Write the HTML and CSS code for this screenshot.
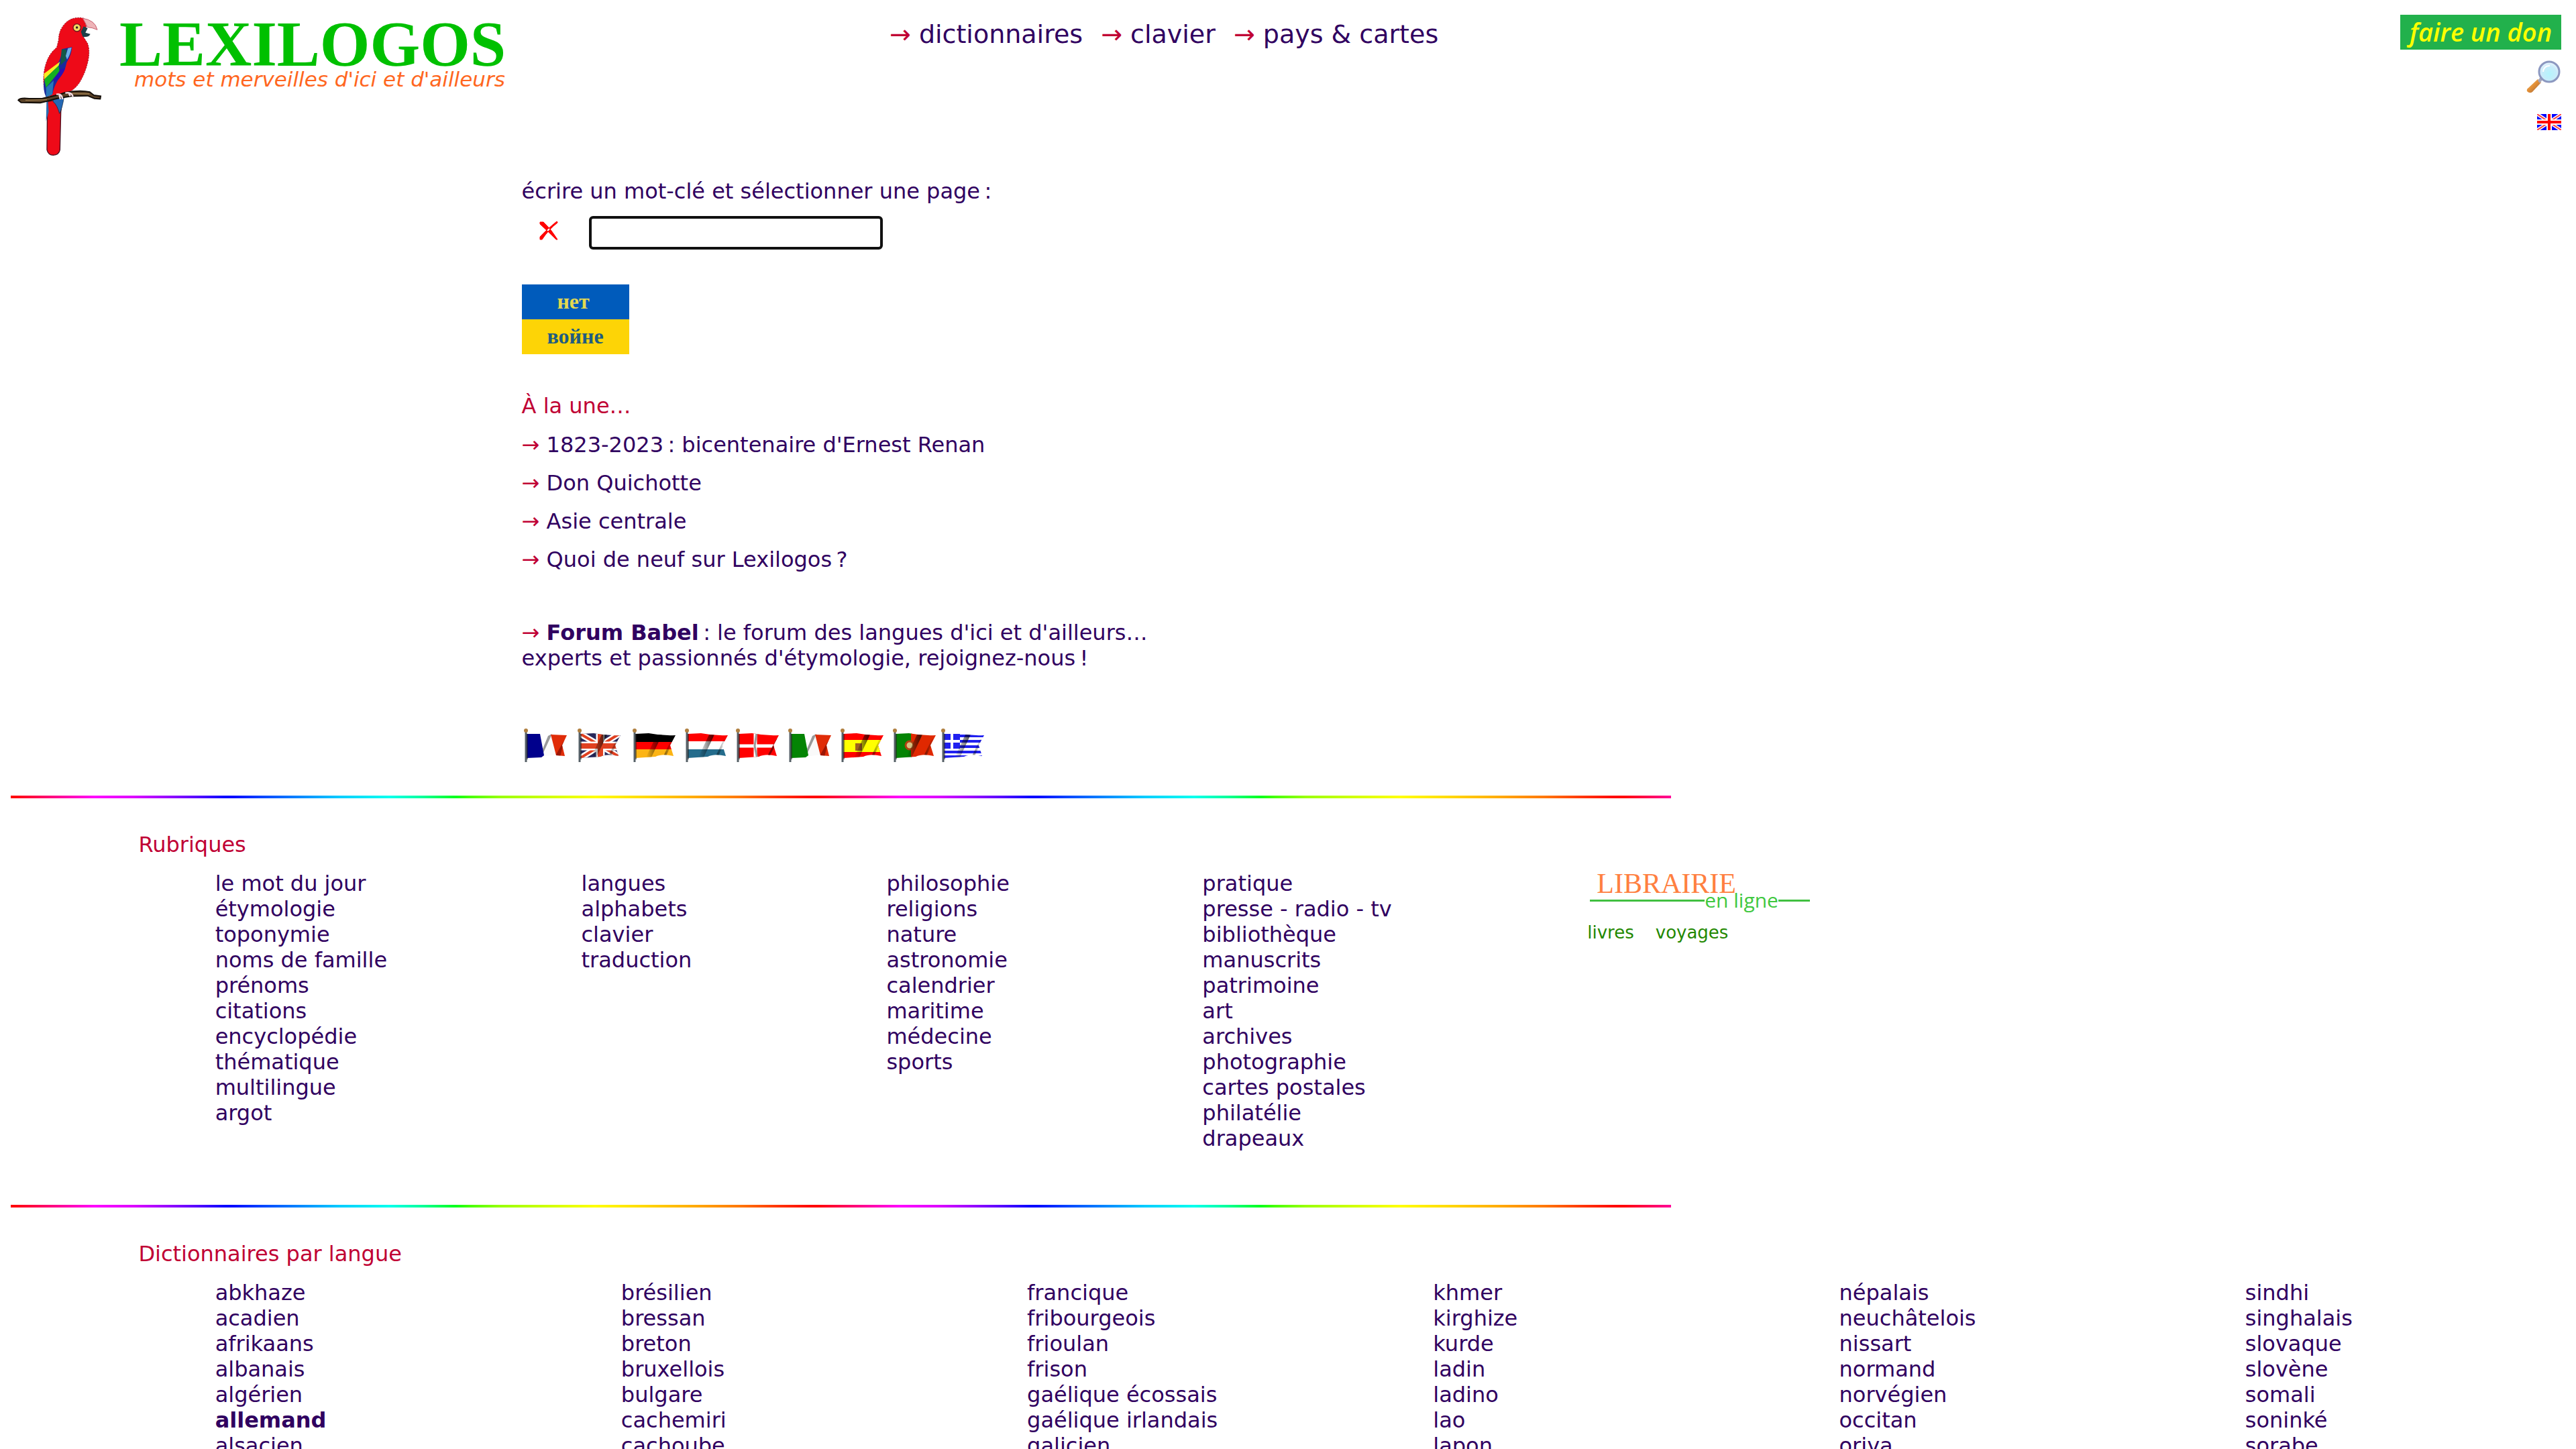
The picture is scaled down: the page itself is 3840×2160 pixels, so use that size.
FILE: index.html
```html
<!DOCTYPE html>
<html lang="fr">
<head>
<meta charset="utf-8">
<title>Lexilogos</title>
<link rel="stylesheet" href="styles.css">
</head>
<body>
<header class="top">
  <a class="logo" href="#">
    <svg class="parrot" viewBox="0 0 480 690" aria-hidden="true">
      <path d="M182 425 L180 640 Q186 664 208 664 Q234 662 238 640 L242 470 L250 410 Z" fill="#ee0a18" stroke="#4a1020" stroke-width="4"/>
      <path d="M178 420 L176 512 L188 470 L184 420 Z" fill="#2a6cb0"/>
      <path d="M205 405 L256 405 Q250 450 236 478 Q226 440 208 425 Z" fill="#2468b4" stroke="#123" stroke-width="2"/>
      <path d="M345 52 Q300 42 268 68 Q232 100 232 150 L224 182 Q188 210 174 260 Q162 300 166 350 L176 400 L250 396 Q300 378 325 340 Q350 300 362 250 Q374 200 362 165 L340 130 L356 90 Z" fill="#ee0a18" stroke="#a01020" stroke-width="3" stroke-dasharray="7 4"/>
      <path d="M340 52 Q395 60 405 103 Q380 92 362 92 Z" fill="#eeb4b8" stroke="#c86070" stroke-width="3"/>
      <path d="M344 88 L362 96 L352 116 L374 122 Q368 138 340 134 L332 112 Z" fill="#1e4048"/>
      <ellipse cx="314" cy="94" rx="17" ry="17" fill="#f2d860" stroke="#701820" stroke-width="4"/>
      <circle cx="314" cy="93" r="5" fill="#222"/>
      <path d="M246 190 L292 180 Q290 215 268 250 Q262 290 228 330 Q210 360 204 392 L176 404 Q160 370 168 330 Q172 310 206 280 Q246 244 246 190Z" fill="#1c2a9c"/>
      <path d="M246 190 L268 192 L264 240 L240 262 Z" fill="#145848"/>
      <path d="M274 186 L290 182 Q284 215 270 236 L264 220Z" fill="#6cb0e4"/>
      <path d="M238 246 L232 264 L168 325 L166 300 Z" fill="#f6ee20"/>
      <path d="M232 264 L236 288 L176 362 L168 325 Z" fill="#14b020"/>
      <path d="M240 280 L262 276 Q250 306 228 325 L206 340Z" fill="#2a10b4"/>
      <path d="M176 362 L210 330 L204 392 L176 404 Z" fill="#2878b8"/>
      <path d="M52 418 Q60 406 100 411 L160 410 Q230 396 262 384 Q330 372 372 382 L390 396 L420 400 L418 412 L392 410 L362 398 L290 400 Q220 410 190 420 L150 430 L64 428 Z" fill="#5a4228" stroke="#140e08" stroke-width="6"/>
      <path d="M84 418 L180 416 M290 388 L370 390" stroke="#a08050" stroke-width="4" fill="none"/>
      <path d="M222 392 Q246 386 250 414 M234 390 L240 414 M262 386 Q290 380 296 402 M276 384 L284 400" fill="none" stroke="#f4dce4" stroke-width="7"/>
    </svg>
    <span class="brand">
      <span class="brand-name">LEXILOGOS</span>
      <span class="brand-tag">mots et merveilles d'ici et d'ailleurs</span>
    </span>
  </a>
  <nav class="menu">
    <span><span class="arrow">→</span> <a href="#">dictionnaires</a></span>
    <span><span class="arrow">→</span> <a href="#">clavier</a></span>
    <span><span class="arrow">→</span> <a href="#">pays &amp; cartes</a></span>
  </nav>
  <div class="tools">
    <a class="donate" href="#">faire un don</a>
    <a class="tool-icon" href="#" aria-label="recherche">
      <svg width="52" height="50" viewBox="0 0 52 50">
        <defs>
          <radialGradient id="lens" cx=".5" cy=".6" r=".6"><stop offset="0" stop-color="#b4f4fc"/><stop offset=".6" stop-color="#c8ecfa"/><stop offset="1" stop-color="#eef6fd"/></radialGradient>
          <linearGradient id="handle" x1="0" y1="0" x2="1" y2="1"><stop offset="0" stop-color="#f8c070"/><stop offset=".5" stop-color="#e08c34"/><stop offset="1" stop-color="#8c6450"/></linearGradient>
        </defs>
        <path d="M17 28 L22 33 L9 47 Q5 50 1 46 Q0 43 3 41 Z" fill="url(#handle)"/>
        <path d="M17 30 L21 25 L24 29 L20 34 Z" fill="#a8a8bc"/>
        <circle cx="34" cy="17" r="15" fill="url(#lens)" stroke="#8c98c0" stroke-width="3"/>
        <path d="M25 17 Q26 8 35 8" fill="none" stroke="#fff" stroke-width="2"/>
      </svg>
    </a>
    <a class="tool-icon" href="#" aria-label="English">
      <svg width="36" height="24" viewBox="0 0 36 24">
        <rect width="36" height="24" fill="#00f"/>
        <path d="M0 0 L36 24 M36 0 L0 24" stroke="#fff" stroke-width="5"/>
        <path d="M0 0 L36 24 M36 0 L0 24" stroke="#f44" stroke-width="2"/>
        <path d="M18 0 V24 M0 12 H36" stroke="#fff" stroke-width="8"/>
        <path d="M18 0 V24 M0 12 H36" stroke="#f00" stroke-width="4"/>
      </svg>
    </a>
  </div>
</header>

<main>
  <section class="intro">
    <label for="mot">écrire un mot-clé et sélectionner une page&#8239;:</label>
    <div class="search">
      <button class="clear" type="button" aria-label="effacer">
        <svg width="28" height="28" viewBox="0 0 28 28"><path d="M1 1 H6 Q18 12 27 27 L25 27 Q14 16 1 4Z M27 1 L26 0 Q10 13 1 23 V27 H4 Q14 12 27 2Z" fill="#f00" stroke="#f00"/></svg>
      </button>
      <input id="mot" class="keyword" type="text">
    </div>
    <a class="peace" href="#"><span class="peace-top">нет</span><span class="peace-bottom">войне</span></a>
    <h2 class="title">À la une…</h2>
    <ul class="news">
      <li><span class="arrow">→</span> <a href="#">1823-2023&#8239;: bicentenaire d'Ernest Renan</a></li>
      <li><span class="arrow">→</span> <a href="#">Don Quichotte</a></li>
      <li><span class="arrow">→</span> <a href="#">Asie centrale</a></li>
      <li><span class="arrow">→</span> <a href="#">Quoi de neuf sur Lexilogos&#8239;?</a></li>
    </ul>
    <p class="forum"><span class="arrow">→</span> <a href="#"><b>Forum Babel</b></a>&#8239;: le forum des langues d'ici et d'ailleurs…<br>experts et passionnés d'étymologie, rejoignez-nous&#8239;!</p>
    <div class="flags">
      <svg class="defs" width="0" height="0" aria-hidden="true">
        <defs>
          <clipPath id="cloth"><path d="M4 8 L24 7 Q44 11 64 10 L56 25 L61 41 Q44 37 34 42 L4 44Z"/></clipPath>
          <clipPath id="fold"><path d="M4 8 L24 8 L30 40 L26 43 L4 44Z M40 9 L64 10 L57 25 L61 41 L48 40Z"/></clipPath>
          <linearGradient id="shade"><stop offset="0" stop-color="#000" stop-opacity="0"/><stop offset=".5" stop-color="#000" stop-opacity=".65"/><stop offset="1" stop-color="#000" stop-opacity="0"/></linearGradient>
          <g id="pole"><path d="M3 4 V50" stroke="#555f66" stroke-width="3"/><path d="M5 8 V46" stroke="#222" stroke-width="1"/><circle cx="3" cy="3" r="3" fill="#b08040"/></g>
          <g id="shadow"><path d="M36 9 L44 9 L28 43 L20 43Z M58 16 L62 14 L50 41 L46 41Z" fill="url(#shade)"/></g>
        </defs>
      </svg>
      <a href="#" aria-label="français"><svg width="68" height="50" viewBox="0 0 68 50"><path d="M38 8 L48 9 L52 30 L48 39 L26 42Z" fill="#fafafa"/><path d="M24 40 L36 11 L42 8 L28 38Z" fill="#999"/><g clip-path="url(#fold)"><path d="M4 6h28v40H4z" fill="#00008c"/><path d="M38 6h28v40H38z" fill="#e02c08"/><path d="M60 18 L46 42 L54 42Z" fill="#500" opacity=".5"/></g><use href="#pole"/></svg></a>
      <a href="#" aria-label="anglais"><svg width="70" height="50" viewBox="0 0 70 50"><g clip-path="url(#cloth)"><path d="M4 6h62v40H4z" fill="#28285c"/><path d="M4 8 L62 42 M62 8 L4 44" stroke="#fff" stroke-width="9"/><path d="M4 8 L62 42 M62 8 L4 44" stroke="#e04020" stroke-width="4"/><path d="M4 26 H66 M34 6 V46" stroke="#fff" stroke-width="13"/><path d="M4 26 H66 M34 6 V46" stroke="#e04020" stroke-width="8"/><use href="#shadow"/></g><use href="#pole"/></svg></a>
      <a href="#" aria-label="allemand"><svg width="66" height="50" viewBox="0 0 66 50"><g clip-path="url(#cloth)"><path d="M4 6h62v14H4z" fill="#000"/><path d="M4 20h62v12H4z" fill="#f00"/><path d="M4 31h62v15H4z" fill="#fcb414"/><use href="#shadow"/></g><use href="#pole"/></svg></a>
      <a href="#" aria-label="néerlandais"><svg width="64" height="50" viewBox="0 0 64 50"><g clip-path="url(#cloth)"><path d="M4 6h62v14H4z" fill="#f00"/><path d="M4 19h62v12H4z" fill="#fff"/><path d="M4 31h62v15H4z" fill="#246c8c"/><use href="#shadow"/></g><use href="#pole"/></svg></a>
      <a href="#" aria-label="danois"><svg width="66" height="50" viewBox="0 0 66 50"><g clip-path="url(#cloth)"><path d="M4 6h62v40H4z" fill="#f00"/><path d="M4 26 H66 M29 6 V46" stroke="#fff" stroke-width="5"/><path d="M31 6 L28 26 L32 46" stroke="#999" stroke-width="3" fill="none"/><path d="M62 16 L48 42" stroke="#800" stroke-width="3"/></g><use href="#pole"/></svg></a>
      <a href="#" aria-label="italien"><svg width="66" height="50" viewBox="0 0 66 50"><path d="M38 8 L48 9 L52 30 L48 39 L26 42Z" fill="#fafafa"/><path d="M24 40 L36 11 L42 8 L28 38Z" fill="#999"/><g clip-path="url(#fold)"><path d="M4 6h28v40H4z" fill="#048404"/><path d="M38 6h28v40H38z" fill="#e02c08"/><path d="M60 18 L46 42 L54 42Z" fill="#500" opacity=".5"/></g><use href="#pole"/></svg></a>
      <a href="#" aria-label="espagnol"><svg width="66" height="50" viewBox="0 0 66 50"><g clip-path="url(#cloth)"><path d="M4 6h62v40H4z" fill="#f00"/><path d="M4 17h62v18H4z" fill="#ff0"/><path d="M22 22 H32 V33 H22Z" fill="#a06020"/><use href="#shadow"/></g><use href="#pole"/></svg></a>
      <a href="#" aria-label="portugais"><svg width="60" height="50" viewBox="0 0 60 50" overflow="visible"><g clip-path="url(#cloth)"><path d="M4 6h24v40H4z" fill="#048404"/><path d="M27 6h40v40H27z" fill="#e02800"/><circle cx="25" cy="25" r="6" fill="#d8c080" stroke="#b04010" stroke-width="3"/><use href="#shadow"/></g><use href="#pole"/></svg></a>
      <a href="#" aria-label="grec"><svg width="66" height="50" viewBox="0 0 66 50"><g clip-path="url(#cloth)"><path d="M4 6h62v40H4z" fill="#fff"/><path d="M4 11 H66 M4 19 H66 M4 27 H66 M4 35 H66 M4 42 H66" stroke="#2020f0" stroke-width="4"/><path d="M4 8h24v22H4z" fill="#2020f0"/><path d="M4 19 H28 M16 8 V30" stroke="#fff" stroke-width="4"/><use href="#shadow"/></g><use href="#pole"/></svg></a>
    </div>
  </section>

  <hr class="rainbow">
  <section class="block">
    <h2 class="title">Rubriques</h2>
    <div class="topics">
      <ul>
        <li><a href="#">le mot du jour</a></li><li><a href="#">étymologie</a></li><li><a href="#">toponymie</a></li><li><a href="#">noms de famille</a></li><li><a href="#">prénoms</a></li><li><a href="#">citations</a></li><li><a href="#">encyclopédie</a></li><li><a href="#">thématique</a></li><li><a href="#">multilingue</a></li><li><a href="#">argot</a></li>
      </ul>
      <ul>
        <li><a href="#">langues</a></li><li><a href="#">alphabets</a></li><li><a href="#">clavier</a></li><li><a href="#">traduction</a></li>
      </ul>
      <ul>
        <li><a href="#">philosophie</a></li><li><a href="#">religions</a></li><li><a href="#">nature</a></li><li><a href="#">astronomie</a></li><li><a href="#">calendrier</a></li><li><a href="#">maritime</a></li><li><a href="#">médecine</a></li><li><a href="#">sports</a></li>
      </ul>
      <ul>
        <li><a href="#">pratique</a></li><li><a href="#">presse - radio - tv</a></li><li><a href="#">bibliothèque</a></li><li><a href="#">manuscrits</a></li><li><a href="#">patrimoine</a></li><li><a href="#">art</a></li><li><a href="#">archives</a></li><li><a href="#">photographie</a></li><li><a href="#">cartes postales</a></li><li><a href="#">philatélie</a></li><li><a href="#">drapeaux</a></li>
      </ul>
      <aside class="shop">
        <a class="shop-logo" href="#">
          <span class="shop-name">LIBRAIRIE</span>
          <span class="shop-line">en ligne</span>
        </a>
        <div class="shop-links"><a href="#">livres</a><a href="#">voyages</a></div>
      </aside>
    </div>
  </section>

  <hr class="rainbow">
  <section class="block">
    <h2 class="title">Dictionnaires par langue</h2>
    <div class="languages">
      <ul><li><a href="#">abkhaze</a></li><li><a href="#">acadien</a></li><li><a href="#">afrikaans</a></li><li><a href="#">albanais</a></li><li><a href="#">algérien</a></li><li><a href="#"><b>allemand</b></a></li><li><a href="#">alsacien</a></li></ul>
      <ul><li><a href="#">brésilien</a></li><li><a href="#">bressan</a></li><li><a href="#">breton</a></li><li><a href="#">bruxellois</a></li><li><a href="#">bulgare</a></li><li><a href="#">cachemiri</a></li><li><a href="#">cachoube</a></li></ul>
      <ul><li><a href="#">francique</a></li><li><a href="#">fribourgeois</a></li><li><a href="#">frioulan</a></li><li><a href="#">frison</a></li><li><a href="#">gaélique écossais</a></li><li><a href="#">gaélique irlandais</a></li><li><a href="#">galicien</a></li></ul>
      <ul><li><a href="#">khmer</a></li><li><a href="#">kirghize</a></li><li><a href="#">kurde</a></li><li><a href="#">ladin</a></li><li><a href="#">ladino</a></li><li><a href="#">lao</a></li><li><a href="#">lapon</a></li></ul>
      <ul><li><a href="#">népalais</a></li><li><a href="#">neuchâtelois</a></li><li><a href="#">nissart</a></li><li><a href="#">normand</a></li><li><a href="#">norvégien</a></li><li><a href="#">occitan</a></li><li><a href="#">oriya</a></li></ul>
      <ul><li><a href="#">sindhi</a></li><li><a href="#">singhalais</a></li><li><a href="#">slovaque</a></li><li><a href="#">slovène</a></li><li><a href="#">somali</a></li><li><a href="#">soninké</a></li><li><a href="#">sorabe</a></li></ul>
    </div>
  </section>
</main>
</body>
</html>
```
FILE: styles.css
```css
* { box-sizing: border-box; }

body {
  margin: 0;
  padding: 0 16px;
  background: #fff;
  color: #300060;
  font: 32px/38px "DejaVu Sans", Verdana, sans-serif;
}

a { color: inherit; text-decoration: none; }
ul { margin: 0; padding: 0; list-style: none; }
svg { display: block; }

.arrow, .title { color: #c00034; }
.title { margin: 0; font-size: 32px; font-weight: normal; }

/* header */
.top {
  display: grid;
  grid-template-columns: 34.4% 1fr auto;
  align-items: start;
  min-height: 266px;
}
.logo { display: flex; gap: 8px; padding-top: 10px; }
.parrot { width: 160px; height: 230px; margin-left: -6px; }
.brand { display: flex; flex-direction: column; padding-top: 16px; }
.brand-name {
  color: #00c000;
  font: bold 96px/80px "Liberation Serif", serif;
}
.brand-tag {
  padding-left: 22px;
  color: #ff6620;
  font: italic 31px/24px "DejaVu Sans", sans-serif;
}
.menu {
  display: flex;
  gap: 27px;
  padding-top: 29px;
  font-size: 38px;
  line-height: 44px;
}
.tools {
  display: flex;
  flex-direction: column;
  align-items: flex-end;
  padding: 22px 6px 0 0;
}
.donate {
  width: 240px;
  height: 52px;
  margin-bottom: 16px;
  background: #22b14c;
  color: #ff0;
  font: italic 600 38px/50px "Open Sans", sans-serif;
  text-align: center;
}
.tool-icon { margin-bottom: 30px; }

/* keyword search and news */
.intro { margin-left: 20%; }
.search {
  display: flex;
  align-items: center;
  gap: 46px;
  padding: 18px 0 52px 26px;
}
.clear { padding: 0 0 6px; border: 0; background: none; }
.keyword {
  width: 438px;
  height: 50px;
  padding: 2px 6px;
  border: 4px solid #101010;
  border-radius: 6px;
  outline: 0;
  font: inherit;
}
.peace {
  display: block;
  width: 160px;
  margin-bottom: 58px;
  font: bold 32px/50px "Liberation Serif", serif;
  text-align: center;
}
.peace span { display: block; height: 52px; }
.peace-top { background: #005bbb; color: #e4d850; padding-right: 6px; }
.peace-bottom { background: #fdd406; color: #205c80; }
.news { display: grid; gap: 19px; margin: 20px 0 71px; }
.forum { margin: 0 0 86px; }
.flags { display: flex; gap: 12px; margin-bottom: 50px; padding-left: 3px; }
.defs { position: absolute; }

/* sections */
.rainbow {
  width: 65%;
  height: 4px;
  margin: 0;
  border: 0;
  background: repeating-linear-gradient(90deg,
    #f00 0, #f04 34px, #f09 75px, #f0f 125px, #d0f 183px, #90f 233px,
    #50f 278px, #00f 324px, #04f 374px, #08f 432px, #0cf 490px, #0fe 564px,
    #0f9 614px, #0f2 660px, #4f0 684px, #9f0 730px, #cf0 796px, #ff0 871px,
    #fd0 937px, #fa0 1020px, #f70 1087px, #f30 1145px, #f00 1200px);
}
.block { padding: 50px 0 80px; }
.block .title { margin: 0 0 20px 5%; }
.topics, .languages { display: grid; margin-left: 8%; }
.topics { grid-template-columns: 546fr 455fr 471fr 574fr 1458fr; }
.languages { grid-template-columns: repeat(6, 1fr); column-gap: 128px; }

.shop-logo { display: block; width: 332px; padding-left: 4px; }
.shop-name {
  display: block;
  padding-left: 10px;
  color: #ff8040;
  font: 42px/38px "Liberation Serif", serif;
}
.shop-line {
  display: flex;
  align-items: center;
  color: #40c840;
  font: 30px/12px "Open Sans", sans-serif;
}
.shop-line::before, .shop-line::after {
  content: "";
  height: 3px;
  background: #40c040;
}
.shop-line::before { width: 171px; }
.shop-line::after { flex: 1; }
.shop-links {
  display: flex;
  gap: 32px;
  padding-top: 23px;
  color: #280;
  font-size: 26px;
}
```
